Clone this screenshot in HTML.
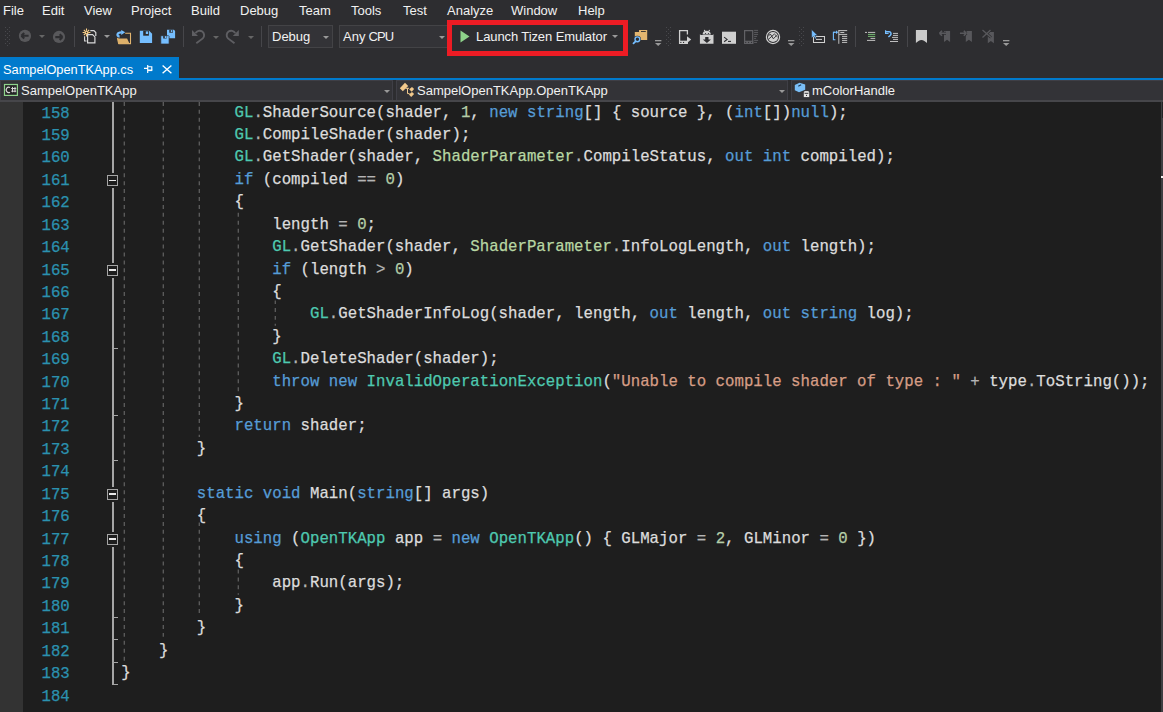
<!DOCTYPE html>
<html><head><meta charset="utf-8">
<style>
*{margin:0;padding:0;box-sizing:border-box}
html,body{width:1163px;height:712px;overflow:hidden;background:#2D2D30}
body{position:relative;font-family:"Liberation Sans",sans-serif;color:#F1F1F1}
.abs{position:absolute}
.mi{position:absolute;top:3px;font-size:13px;line-height:16px;color:#F1F1F1;white-space:nowrap}
.sep{position:absolute;top:26px;width:1px;height:21px;background:#46464A}
.dd{position:absolute;width:0;height:0;border-left:3px solid transparent;border-right:3px solid transparent;border-top:3px solid #999}
.grip{position:absolute;top:27px;width:6px;height:20px;background-image:radial-gradient(circle at 1px 1px,#505054 0.9px,transparent 1px),radial-gradient(circle at 1px 1px,#505054 0.9px,transparent 1px);background-size:4px 4px,4px 4px;background-position:0 0,3px 2px}
.combo{position:absolute;top:25px;height:23px;background:#333337;border:1px solid #434346}
.ctext{position:absolute;font-size:13px;line-height:16px;color:#F1F1F1;white-space:nowrap}
svg{position:absolute;overflow:visible}
#tab{position:absolute;left:0;top:57px;width:179px;height:21px;background:#007ACC}
#tabline{position:absolute;left:0;top:78px;width:1163px;height:2px;background:#007ACC}
#nav{position:absolute;left:0;top:80px;width:1163px;height:20px;background:#2D2D30}
#navline{position:absolute;left:0;top:100px;width:1163px;height:1.7px;background:#46464A}
.nd{position:absolute;top:80px;height:20px;background:#333337;border:1px solid #3F3F46;border-bottom:none}
#editor{position:absolute;left:0;top:102px;width:1161px;height:610px;background:#1E1E1E;overflow:hidden}
#margin{position:absolute;left:0;top:0;width:23px;height:610px;background:#333333}
.ln{position:absolute;left:121.3px;height:22.42px;line-height:22.42px;font-family:"Liberation Mono",monospace;font-size:15.73px;color:#DCDCDC;white-space:pre;-webkit-text-stroke:0.25px currentColor}
.nm{position:absolute;left:0;width:69.8px;text-align:right;height:22.42px;line-height:22.42px;font-family:"Liberation Mono",monospace;font-size:15.7px;color:#2B91AF;white-space:pre;-webkit-text-stroke:0.25px currentColor}
.k{color:#569CD6}.t{color:#4EC9B0}.e{color:#B8D7A3}.n{color:#B5CEA8}.s{color:#D69D85}.o{color:#B4B4B4}
.fl{position:absolute;background:#A5A5A5}
.fb{position:absolute;width:11px;height:11px;border:1.5px solid #A5A5A5;background:#1E1E1E}
.fb:after{content:"";position:absolute;left:0.6px;top:3.6px;width:7.4px;height:1.4px;background:#E8E8E8}
.gd{position:absolute;width:1px;background-image:linear-gradient(to bottom,#5A5A5A 50%,transparent 50%);background-size:1px 8px}
#scroll{position:absolute;left:1161px;top:102px;width:2px;height:610px;background:#3E3E42}
#scrolltop{position:absolute;left:1162px;top:102px;width:1px;height:16px;background:#232325}
</style></head>
<body>
<!-- menu -->
<div class="mi" style="left:3px">File</div>
<div class="mi" style="left:42px">Edit</div>
<div class="mi" style="left:84px">View</div>
<div class="mi" style="left:131px">Project</div>
<div class="mi" style="left:191px">Build</div>
<div class="mi" style="left:240px">Debug</div>
<div class="mi" style="left:299px">Team</div>
<div class="mi" style="left:351px">Tools</div>
<div class="mi" style="left:403px">Test</div>
<div class="mi" style="left:447px">Analyze</div>
<div class="mi" style="left:511px">Window</div>
<div class="mi" style="left:578px">Help</div>

<!-- toolbar -->
<svg style="left:5px;top:27px" width="6" height="20" viewBox="0 0 6 20" fill="#48484C"><rect x="0" y="0" width="1" height="1"/><rect x="4" y="0" width="1" height="1"/><rect x="2" y="2" width="1" height="1"/><rect x="0" y="4" width="1" height="1"/><rect x="4" y="4" width="1" height="1"/><rect x="2" y="6" width="1" height="1"/><rect x="0" y="8" width="1" height="1"/><rect x="4" y="8" width="1" height="1"/><rect x="2" y="10" width="1" height="1"/><rect x="0" y="12" width="1" height="1"/><rect x="4" y="12" width="1" height="1"/><rect x="2" y="14" width="1" height="1"/><rect x="0" y="16" width="1" height="1"/><rect x="4" y="16" width="1" height="1"/><rect x="2" y="18" width="1" height="1"/></svg>
<svg style="left:18px;top:29px" width="14" height="14" viewBox="0 0 14 14"><circle cx="6.95" cy="6.9" r="6.1" fill="#58585B"/><path d="M3.4 6.7h7.2M3.4 6.7l2.8-2.8M3.4 6.7l2.8 2.8" stroke="#2D2D30" stroke-width="2.1" fill="none"/></svg>
<div class="dd" style="left:39px;top:35px;border-top-color:#666"></div>
<svg style="left:52px;top:30px" width="14" height="14" viewBox="0 0 14 14"><circle cx="7" cy="6.95" r="6.1" fill="#58585B"/><path d="M3.3 7.1h7.2M10.5 7.1l-2.8-2.8M10.5 7.1l-2.8 2.8" stroke="#2D2D30" stroke-width="2.1" fill="none"/></svg>
<div class="sep" style="left:74px"></div>
<svg style="left:80px;top:26px" width="20" height="20" viewBox="0 0 20 20"><g stroke="#FFD38A" stroke-width="1.1" fill="none"><path d="M6.5 2.6v2.2M6.5 8.2v2.2M2.6 6.5h2.2M8.2 6.5h2.2M3.8 3.8l1.5 1.5M7.7 7.7l1.5 1.5M9.2 3.8L7.7 5.3M5.3 7.7L3.8 9.2"/><circle cx="6.5" cy="6.5" r="1.3"/></g><path d="M10.3 4.6h3.6l1.9 1.9v3.5" stroke="#D8D8D8" stroke-width="1.2" fill="none"/><path d="M7.6 8.6h5l2.3 2.3v5.9H7.6z" stroke="#D8D8D8" stroke-width="1.2" fill="#2D2D30"/><path d="M4.6 10.2v4.8h2" stroke="#D8D8D8" stroke-width="1.1" fill="none"/></svg>
<div class="dd" style="left:104px;top:35px"></div>
<svg style="left:116px;top:26px" width="18" height="20" viewBox="0 0 18 20"><path d="M9.2 7.3h5.3v10.3H2.5" stroke="#E2B56F" stroke-width="1.1" fill="none"/><path d="M0.9 12.4l0.9-0.9 0.8 0.9H11.1l2.6 5.6H2.2z" fill="#DDB06A"/><path d="M3.6 10.6C0.2 10.2 0.6 6.4 5.6 6.4" stroke="#75BEFF" stroke-width="2.1" fill="none"/><path d="M5.2 3.9L9.2 6.3 5.2 9.1z" fill="#75BEFF"/></svg>
<svg style="left:136px;top:27px" width="44" height="20" viewBox="0 0 44 20"><path d="M3.8 3.8h9.4l2.9 2.9v9.2H3.8z" fill="#75BEFF"/><rect x="7.2" y="3.8" width="5.7" height="4.9" fill="#2D2D30"/><rect x="9.8" y="4.4" width="2.3" height="2.6" fill="#75BEFF"/><path d="M31 2.8h7l1.1 1.1v7.3H31z" fill="#75BEFF"/><rect x="33.3" y="2.8" width="3.6" height="2.9" fill="#2D2D30"/><rect x="34.8" y="3.1" width="1.5" height="2" fill="#75BEFF"/><path d="M24.8 8.7h7.7l0.6 0.6V17h-8.3z" fill="#75BEFF" stroke="#2D2D30" stroke-width="0.7"/><rect x="27.2" y="8.7" width="3.4" height="2.8" fill="#2D2D30"/><rect x="28.8" y="9.1" width="1.5" height="2" fill="#75BEFF"/></svg>

<div class="sep" style="left:183px"></div>
<svg style="left:186px;top:26px" width="20" height="20" viewBox="0 0 20 20"><path d="M9.6 7.2A4.5 4.5 0 1 1 16.8 12.4L10.3 17.3" stroke="#5E5E62" stroke-width="1.9" fill="none"/><path d="M6 3.9v6.1h6z" fill="#5E5E62"/></svg>
<div class="dd" style="left:213px;top:36px;border-top-color:#666"></div>
<svg style="left:221px;top:26px" width="24" height="20" viewBox="0 0 24 20"><path d="M14.2 7.2A4.5 4.5 0 1 0 7 12.4L13.5 17.3" stroke="#5E5E62" stroke-width="1.9" fill="none"/><path d="M17.8 3.9v6.1h-6z" fill="#5E5E62"/></svg>
<div class="dd" style="left:248px;top:36px;border-top-color:#666"></div>
<div class="sep" style="left:261px"></div>
<div class="combo" style="left:268px;width:65px"></div>
<div class="ctext" style="left:272px;top:29px">Debug</div>
<div class="dd" style="left:323px;top:36px"></div>
<div class="combo" style="left:339px;width:112px"></div>
<div class="ctext" style="left:343px;top:29px">Any<span style="margin-left:3.2px;letter-spacing:-0.9px">CPU</span></div>
<div class="dd" style="left:439px;top:36px"></div>
<!-- red box -->
<div class="abs" style="left:447px;top:20px;width:181px;height:36px;border:5px solid #ED1C24;background:#2D2D30"></div>
<svg style="left:460px;top:30px" width="10" height="13" viewBox="0 0 10 13"><path d="M0.5 0.5L9.5 6.5 0.5 12.5z" fill="#8DD28A"/></svg>
<div class="ctext" style="left:476px;top:29px;letter-spacing:-0.1px">Launch Tizen Emulator</div>
<div class="dd" style="left:612px;top:35px"></div>
<!-- right icons -->
<svg style="left:630px;top:27px" width="20" height="20" viewBox="0 0 20 20"><path d="M4.8 5.1h4.2V2.9h8.2v10.2H4.8z" fill="#E2B56F"/><rect x="11" y="4.1" width="4.8" height="0.9" fill="#2D2D30"/><circle cx="7.4" cy="12.3" r="3.6" fill="#2D2D30"/><circle cx="7.4" cy="12.3" r="2.4" stroke="#75BEFF" stroke-width="1.4" fill="none"/><path d="M5.6 14.3L3.5 16.4" stroke="#75BEFF" stroke-width="1.8" stroke-linecap="round"/></svg>
<svg style="left:655px;top:39px" width="8" height="8" viewBox="0 0 8 8"><rect x="0" y="1" width="6.4" height="1.3" fill="#9A9A9A"/><path d="M0 4h6.4L3.2 7z" fill="#9A9A9A"/></svg>
<svg style="left:666px;top:27px" width="6" height="20" viewBox="0 0 6 20" fill="#48484C"><rect x="0" y="0" width="1" height="1"/><rect x="4" y="0" width="1" height="1"/><rect x="2" y="2" width="1" height="1"/><rect x="0" y="4" width="1" height="1"/><rect x="4" y="4" width="1" height="1"/><rect x="2" y="6" width="1" height="1"/><rect x="0" y="8" width="1" height="1"/><rect x="4" y="8" width="1" height="1"/><rect x="2" y="10" width="1" height="1"/><rect x="0" y="12" width="1" height="1"/><rect x="4" y="12" width="1" height="1"/><rect x="2" y="14" width="1" height="1"/><rect x="0" y="16" width="1" height="1"/><rect x="4" y="16" width="1" height="1"/><rect x="2" y="18" width="1" height="1"/></svg>
<svg style="left:678px;top:29px" width="16" height="16" viewBox="0 0 16 16"><path d="M9.4 5.5V1.7H1.6v12.6h7.6v-1.2" stroke="#D0D0D0" stroke-width="1.3" fill="none"/><rect x="1" y="11.7" width="8.8" height="3.3" fill="#D0D0D0"/><rect x="2.3" y="12.9" width="1.1" height="1.1" fill="#2D2D30"/><rect x="5" y="12.9" width="1.1" height="1.1" fill="#2D2D30"/><path d="M9 7.2l4.2 3.4L9 14z" fill="#D0D0D0"/></svg>
<svg style="left:699px;top:29px" width="16" height="16" viewBox="0 0 16 16"><path d="M3.6 5.6a4.1 3.9 0 0 1 8.2 0z" fill="#D0D0D0"/><circle cx="5.6" cy="1.4" r="0.7" fill="#D0D0D0"/><circle cx="10.3" cy="1.4" r="0.7" fill="#D0D0D0"/><circle cx="6.5" cy="4.5" r="0.6" fill="#2D2D30"/><circle cx="9.5" cy="4.5" r="0.6" fill="#2D2D30"/><path d="M0.9 5.3l1 0.8h11.6l1-0.8v9.5H0.9z" fill="#D0D0D0"/><path d="M6.2 8h3.3v2.6h2.5l-4.1 3.5-4.1-3.5h2.4z" fill="#2D2D30"/></svg>
<svg style="left:722px;top:31px" width="15" height="14" viewBox="0 0 15 14"><rect x="0" y="0.7" width="14" height="12.1" fill="#D0D0D0"/><path d="M2.1 6.1l3 2.3-3 2.3" stroke="#2D2D30" stroke-width="1.1" fill="none"/><path d="M6 10.4h3" stroke="#2D2D30" stroke-width="1.1"/></svg>
<svg style="left:743px;top:29px" width="16" height="16" viewBox="0 0 16 16"><path d="M1.6 1.6h8.1v12.7H1.6z" stroke="#616165" stroke-width="1.2" fill="none"/><rect x="1" y="11.7" width="9.3" height="3.3" fill="#616165"/><rect x="2.2" y="12.9" width="1" height="1" fill="#2D2D30"/><rect x="5.1" y="12.9" width="1" height="1" fill="#2D2D30"/><rect x="8" y="12.9" width="1" height="1" fill="#2D2D30"/><path d="M11.1 1.4h4M11.1 3.4h4M11.1 5.4h4M11.1 7.4h3M11.1 9.4h2M11.1 11.4h4M11.1 13.4h3" stroke="#616165" stroke-width="0.9"/></svg>
<svg style="left:765px;top:29px" width="17" height="17" viewBox="0 0 17 17"><circle cx="8" cy="8" r="6.6" stroke="#D0D0D0" stroke-width="1.2" fill="none"/><circle cx="8" cy="8" r="5.1" fill="#D0D0D0"/><path d="M3 7.5L5.3 5l3.1 4.8 3.1-3.3M3.2 10.5l6.2-5.5 3.1 3" stroke="#2D2D30" stroke-width="0.9" fill="none"/></svg>
<svg style="left:788px;top:39px" width="8" height="8" viewBox="0 0 8 8"><rect x="0" y="1" width="6.4" height="1.3" fill="#9A9A9A"/><path d="M0 4h6.4L3.2 7z" fill="#9A9A9A"/></svg>
<svg style="left:799px;top:27px" width="6" height="20" viewBox="0 0 6 20" fill="#48484C"><rect x="0" y="0" width="1" height="1"/><rect x="4" y="0" width="1" height="1"/><rect x="2" y="2" width="1" height="1"/><rect x="0" y="4" width="1" height="1"/><rect x="4" y="4" width="1" height="1"/><rect x="2" y="6" width="1" height="1"/><rect x="0" y="8" width="1" height="1"/><rect x="4" y="8" width="1" height="1"/><rect x="2" y="10" width="1" height="1"/><rect x="0" y="12" width="1" height="1"/><rect x="4" y="12" width="1" height="1"/><rect x="2" y="14" width="1" height="1"/><rect x="0" y="16" width="1" height="1"/><rect x="4" y="16" width="1" height="1"/><rect x="2" y="18" width="1" height="1"/></svg>
<svg style="left:808px;top:27px" width="20" height="18" viewBox="0 0 20 18"><path d="M5.5 9.5h11v6h-11z" stroke="#D0D0D0" stroke-width="1.05" fill="none"/><path d="M8 12.4h6" stroke="#D0D0D0" stroke-width="1"/><path d="M3.6 2.5v8.6l2-1.8 1.8 2.6 1.2-.7-1.7-2.6h2.8z" fill="#75BEFF" stroke="#2D2D30" stroke-width="0.5"/></svg>
<svg style="left:830px;top:27px" width="20" height="18" viewBox="0 0 20 18"><path d="M5.2 5.3H3.4v7.4h2" stroke="#75BEFF" stroke-width="1.1" fill="none"/><path d="M3.4 5.3h5M6.6 3.8v3" stroke="#75BEFF" stroke-width="1.1"/><path d="M8.8 3v13.8M8.8 3.6h8.4M10.3 5.5h4M8.8 7.4h8.4M12 9.4h5.2M12 11.4h5.2M12 13.4h5.2M12 15.4h5.2" stroke="#D0D0D0" stroke-width="0.9" fill="none"/></svg>
<div class="sep" style="left:855px"></div>
<svg style="left:864px;top:31px" width="12" height="11" viewBox="0 0 12 11"><path d="M1 1.4h2M4 1.4h7.2M6.5 7.4h4.7M3 9.4h8.2" stroke="#D0D0D0" stroke-width="0.9"/><path d="M4 3.4h7.2M4 5.4h7.2" stroke="#7FCB7A" stroke-width="0.9"/></svg>
<svg style="left:884px;top:30px" width="16" height="13" viewBox="0 0 16 13"><path d="M2 1.8h3.2c2 0 2.4 2.5 1 3.7L4.4 7" stroke="#75BEFF" stroke-width="1.5" fill="none"/><path d="M1.6 0.3v3.2h3" stroke="#75BEFF" stroke-width="1.2" fill="none"/><path d="M9 3.4h5M9 5.4h5M8 7.4h6M9 9.4h5M6 11.5h8" stroke="#D0D0D0" stroke-width="0.9"/></svg>
<div class="sep" style="left:907px"></div>
<svg style="left:915px;top:29px" width="13" height="15" viewBox="0 0 13 15"><path d="M0.9 1.1h11.1v13c-1.6-1.8-3.6-3.2-5.55-3.2S2.5 12.3 0.9 14.1z" fill="#CBCBCB"/></svg>
<svg style="left:938px;top:30px" width="14" height="14" viewBox="0 0 14 14"><path d="M6 1h6.1v11.1l-3.05-2.3-3.05 2.3z" fill="#58585C"/><path d="M1.5 3.2h6.5M1.5 3.2l2.5-2.5M1.5 3.2l2.5 2.5" stroke="#2D2D30" stroke-width="3" fill="none" stroke-linejoin="round"/><path d="M1.5 3.2h6.5M1.5 3.2l2.5-2.5M1.5 3.2l2.5 2.5" stroke="#58585C" stroke-width="1.6" fill="none" stroke-linejoin="round"/></svg>
<svg style="left:959px;top:30px" width="14" height="14" viewBox="0 0 14 14"><path d="M6.8 1h6.1v11.1l-3.05-2.3-3.05 2.3z" fill="#58585C"/><path d="M0.9 3.2h6.4M7.3 3.2L4.8 0.7M7.3 3.2L4.8 5.7" stroke="#2D2D30" stroke-width="3" fill="none" stroke-linejoin="round"/><path d="M0.9 3.2h6.4M7.3 3.2L4.8 0.7M7.3 3.2L4.8 5.7" stroke="#58585C" stroke-width="1.6" fill="none" stroke-linejoin="round"/></svg>
<svg style="left:981px;top:29px" width="15" height="15" viewBox="0 0 15 15"><path d="M6.8 3h6.1v11.2l-3.05-2.3-3.05 2.3z" fill="#58585C"/><path d="M1.5 1l8.5 7.5M9.5 1L1.5 8.5" stroke="#2D2D30" stroke-width="2.6"/><path d="M1.5 1l8.5 7.5M9.5 1L1.5 8.5" stroke="#58585C" stroke-width="1.3"/></svg>
<svg style="left:1003px;top:39px" width="8" height="8" viewBox="0 0 8 8"><rect x="0" y="1" width="6.4" height="1.3" fill="#9A9A9A"/><path d="M0 4h6.4L3.2 7z" fill="#9A9A9A"/></svg>

<!-- tab -->
<div id="tab"></div>
<div id="tabline"></div>
<div class="ctext" style="left:3px;top:62px;font-size:12.8px;color:#FFFFFF">SampelOpenTKApp.cs</div>
<svg style="left:144px;top:64px" width="10" height="9" viewBox="0 0 10 9"><path d="M0 4.4h3.4M3.7 1v7.9M3.7 2.7h4.1v3.6" stroke="#FFFFFF" stroke-width="1.15" fill="none"/><rect x="3.6" y="5.5" width="4.7" height="1.6" fill="#FFFFFF"/></svg>
<svg style="left:162px;top:65px" width="10" height="9" viewBox="0 0 10 9"><path d="M0.6 0.4l8.8 7.8M9.4 0.4L0.6 8.2" stroke="#FFFFFF" stroke-width="1.35"/></svg>

<!-- nav bar -->
<div id="nav"></div>
<div class="nd" style="left:0;width:393px"></div>
<div class="nd" style="left:396px;width:392px"></div>
<div class="nd" style="left:791px;width:380px"></div>
<div id="navline"></div>
<svg style="left:3px;top:83px" width="17" height="15" viewBox="0 0 17 15"><rect x="1.5" y="1.5" width="12.9" height="10.9" stroke="#8FD48C" stroke-width="1.2" fill="#252526"/><path d="M7 4.6A2.5 2.7 0 1 0 7 9.2" stroke="#D8D8D8" stroke-width="1.15" fill="none"/><rect x="9" y="3.9" width="1" height="5.4" fill="#D8D8D8"/><rect x="11.5" y="3.9" width="1" height="5.4" fill="#D8D8D8"/><rect x="8.2" y="5" width="5" height="1" fill="#D8D8D8"/><rect x="8.2" y="7.7" width="5" height="1" fill="#D8D8D8"/></svg>
<div class="ctext" style="left:21px;top:83px">SampelOpenTKApp</div>
<div class="dd" style="left:384px;top:90px"></div>
<svg style="left:396px;top:80px" width="20" height="20" viewBox="0 0 20 20"><path d="M9 2.8l3.2 3.2-5.4 5.2-3-3z" fill="#F2C98C"/><path d="M11.5 8.3v5.3h2M9.5 8.3h3.5" stroke="#F2C98C" stroke-width="1" fill="none"/><path d="M16 6.9l2.1 2.2-2.4 2.6-2.5-2.4z" fill="#F2C98C"/><path d="M16 12l2.1 2.1-2.9 3-2.3-2.5z" fill="#F2C98C"/></svg>
<div class="ctext" style="left:417px;top:83px">SampelOpenTKApp.OpenTKApp</div>
<div class="dd" style="left:779px;top:90px"></div>
<svg style="left:790px;top:80px" width="20" height="20" viewBox="0 0 20 20"><path d="M4.8 5L9.5 2.8 15.2 4.6v5.2L9 12.2 4.8 10.2z" fill="#7ABFF7"/><path d="M8.3 6.3l2.8-1.6" stroke="#1E3A55" stroke-width="1.1"/><rect x="13.8" y="12.2" width="5.4" height="4.9" fill="#E6E6E6"/><path d="M14.6 12.3v-0.8h3.8v0.8" stroke="#E6E6E6" stroke-width="0.9" fill="none"/><rect x="14.6" y="13.2" width="3.8" height="0.8" fill="#333337"/><circle cx="16.5" cy="15.4" r="0.55" fill="#333337"/></svg>
<div class="ctext" style="left:812px;top:83px">mColorHandle</div>

<!-- editor -->
<div id="editor">
<div id="margin"></div>
<div class="nm" style="top:0.60px">158</div>
<div class="nm" style="top:23.02px">159</div>
<div class="nm" style="top:45.44px">160</div>
<div class="nm" style="top:67.86px">161</div>
<div class="nm" style="top:90.28px">162</div>
<div class="nm" style="top:112.70px">163</div>
<div class="nm" style="top:135.12px">164</div>
<div class="nm" style="top:157.54px">165</div>
<div class="nm" style="top:179.96px">166</div>
<div class="nm" style="top:202.38px">167</div>
<div class="nm" style="top:224.80px">168</div>
<div class="nm" style="top:247.22px">169</div>
<div class="nm" style="top:269.64px">170</div>
<div class="nm" style="top:292.06px">171</div>
<div class="nm" style="top:314.48px">172</div>
<div class="nm" style="top:336.90px">173</div>
<div class="nm" style="top:359.32px">174</div>
<div class="nm" style="top:381.74px">175</div>
<div class="nm" style="top:404.16px">176</div>
<div class="nm" style="top:426.58px">177</div>
<div class="nm" style="top:449.00px">178</div>
<div class="nm" style="top:471.42px">179</div>
<div class="nm" style="top:493.84px">180</div>
<div class="nm" style="top:516.26px">181</div>
<div class="nm" style="top:538.68px">182</div>
<div class="nm" style="top:561.10px">183</div>
<div class="nm" style="top:583.52px">184</div>
<div style="position:absolute;left:0;top:-102px">
<svg style="position:absolute;left:0;top:0" width="1163" height="712" viewBox="0 0 1163 712"><g stroke="#5E5E5E" stroke-width="1.3" stroke-dasharray="3.96 3.965">
<line x1="124.3" y1="102.00" x2="124.3" y2="661.00" stroke-dashoffset="0.080"/>
<line x1="163.3" y1="102.00" x2="163.3" y2="638.00" stroke-dashoffset="0.080"/>
<line x1="199.3" y1="102.00" x2="199.3" y2="436.90" stroke-dashoffset="0.080"/>
<line x1="199.3" y1="522.58" x2="199.3" y2="614.26" stroke-dashoffset="0.635"/>
<line x1="238.3" y1="210.70" x2="238.3" y2="392.06" stroke-dashoffset="5.755"/>
<line x1="238.3" y1="569.42" x2="238.3" y2="594.84" stroke-dashoffset="7.850"/>
<line x1="275.3" y1="300.38" x2="275.3" y2="325.80" stroke-dashoffset="0.335"/>
</g></svg>
<div class="fl" style="left:112px;top:101.5px;width:2px;height:71.5px"></div>
<div class="fb" style="left:107px;top:175.0px"></div>
<div class="fl" style="left:112px;top:188.0px;width:2px;height:74.7px"></div>
<div class="fb" style="left:107px;top:264.6px"></div>
<div class="fl" style="left:112px;top:277.6px;width:2px;height:209.2px"></div>
<div class="fb" style="left:107px;top:488.8px"></div>
<div class="fl" style="left:112px;top:501.8px;width:2px;height:29.8px"></div>
<div class="fb" style="left:107px;top:533.7px"></div>
<div class="fl" style="left:112px;top:546.7px;width:2px;height:138.3px"></div>
<div class="fl" style="left:112px;top:347.62px;width:6px;height:1.3px"></div>
<div class="fl" style="left:112px;top:414.88px;width:6px;height:1.3px"></div>
<div class="fl" style="left:112px;top:459.72px;width:6px;height:1.3px"></div>
<div class="fl" style="left:112px;top:616.66px;width:6px;height:1.3px"></div>
<div class="fl" style="left:112px;top:639.08px;width:6px;height:1.3px"></div>
<div class="fl" style="left:112px;top:661.50px;width:6px;height:1.3px"></div>
<div class="fl" style="left:112px;top:683.92px;width:6px;height:1.3px"></div>
</div>
<div class="ln" style="top:-0.40px">            <span class="t">GL</span><span class="o">.</span>ShaderSource(shader, <span class="n">1</span>, <span class="k">new</span> <span class="k">string</span>[] { source }, (<span class="k">int</span>[])<span class="k">null</span>);</div>
<div class="ln" style="top:22.02px">            <span class="t">GL</span><span class="o">.</span>CompileShader(shader);</div>
<div class="ln" style="top:44.44px">            <span class="t">GL</span><span class="o">.</span>GetShader(shader, <span class="e">ShaderParameter</span><span class="o">.</span>CompileStatus, <span class="k">out</span> <span class="k">int</span> compiled);</div>
<div class="ln" style="top:66.86px">            <span class="k">if</span> (compiled <span class="o">==</span> <span class="n">0</span>)</div>
<div class="ln" style="top:89.28px">            {</div>
<div class="ln" style="top:111.70px">                length <span class="o">=</span> <span class="n">0</span>;</div>
<div class="ln" style="top:134.12px">                <span class="t">GL</span><span class="o">.</span>GetShader(shader, <span class="e">ShaderParameter</span><span class="o">.</span>InfoLogLength, <span class="k">out</span> length);</div>
<div class="ln" style="top:156.54px">                <span class="k">if</span> (length <span class="o">&gt;</span> <span class="n">0</span>)</div>
<div class="ln" style="top:178.96px">                {</div>
<div class="ln" style="top:201.38px">                    <span class="t">GL</span><span class="o">.</span>GetShaderInfoLog(shader, length, <span class="k">out</span> length, <span class="k">out</span> <span class="k">string</span> log);</div>
<div class="ln" style="top:223.80px">                }</div>
<div class="ln" style="top:246.22px">                <span class="t">GL</span><span class="o">.</span>DeleteShader(shader);</div>
<div class="ln" style="top:268.64px">                <span class="k">throw</span> <span class="k">new</span> <span class="t">InvalidOperationException</span>(<span class="s">&quot;Unable to compile shader of type : &quot;</span> <span class="o">+</span> type<span class="o">.</span>ToString());</div>
<div class="ln" style="top:291.06px">            }</div>
<div class="ln" style="top:313.48px">            <span class="k">return</span> shader;</div>
<div class="ln" style="top:335.90px">        }</div>
<div class="ln" style="top:358.32px"></div>
<div class="ln" style="top:380.74px">        <span class="k">static</span> <span class="k">void</span> Main(<span class="k">string</span>[] args)</div>
<div class="ln" style="top:403.16px">        {</div>
<div class="ln" style="top:425.58px">            <span class="k">using</span> (<span class="t">OpenTKApp</span> app <span class="o">=</span> <span class="k">new</span> <span class="t">OpenTKApp</span>() { GLMajor <span class="o">=</span> <span class="n">2</span>, GLMinor <span class="o">=</span> <span class="n">0</span> })</div>
<div class="ln" style="top:448.00px">            {</div>
<div class="ln" style="top:470.42px">                app<span class="o">.</span>Run(args);</div>
<div class="ln" style="top:492.84px">            }</div>
<div class="ln" style="top:515.26px">        }</div>
<div class="ln" style="top:537.68px">    }</div>
<div class="ln" style="top:560.10px">}</div>
<div class="ln" style="top:582.52px"></div>
</div>
<div id="scroll"></div><div id="scrolltop"></div><div class="abs" style="left:1161px;top:176px;width:2px;height:2px;background:#F0F0F0"></div>
</body></html>
